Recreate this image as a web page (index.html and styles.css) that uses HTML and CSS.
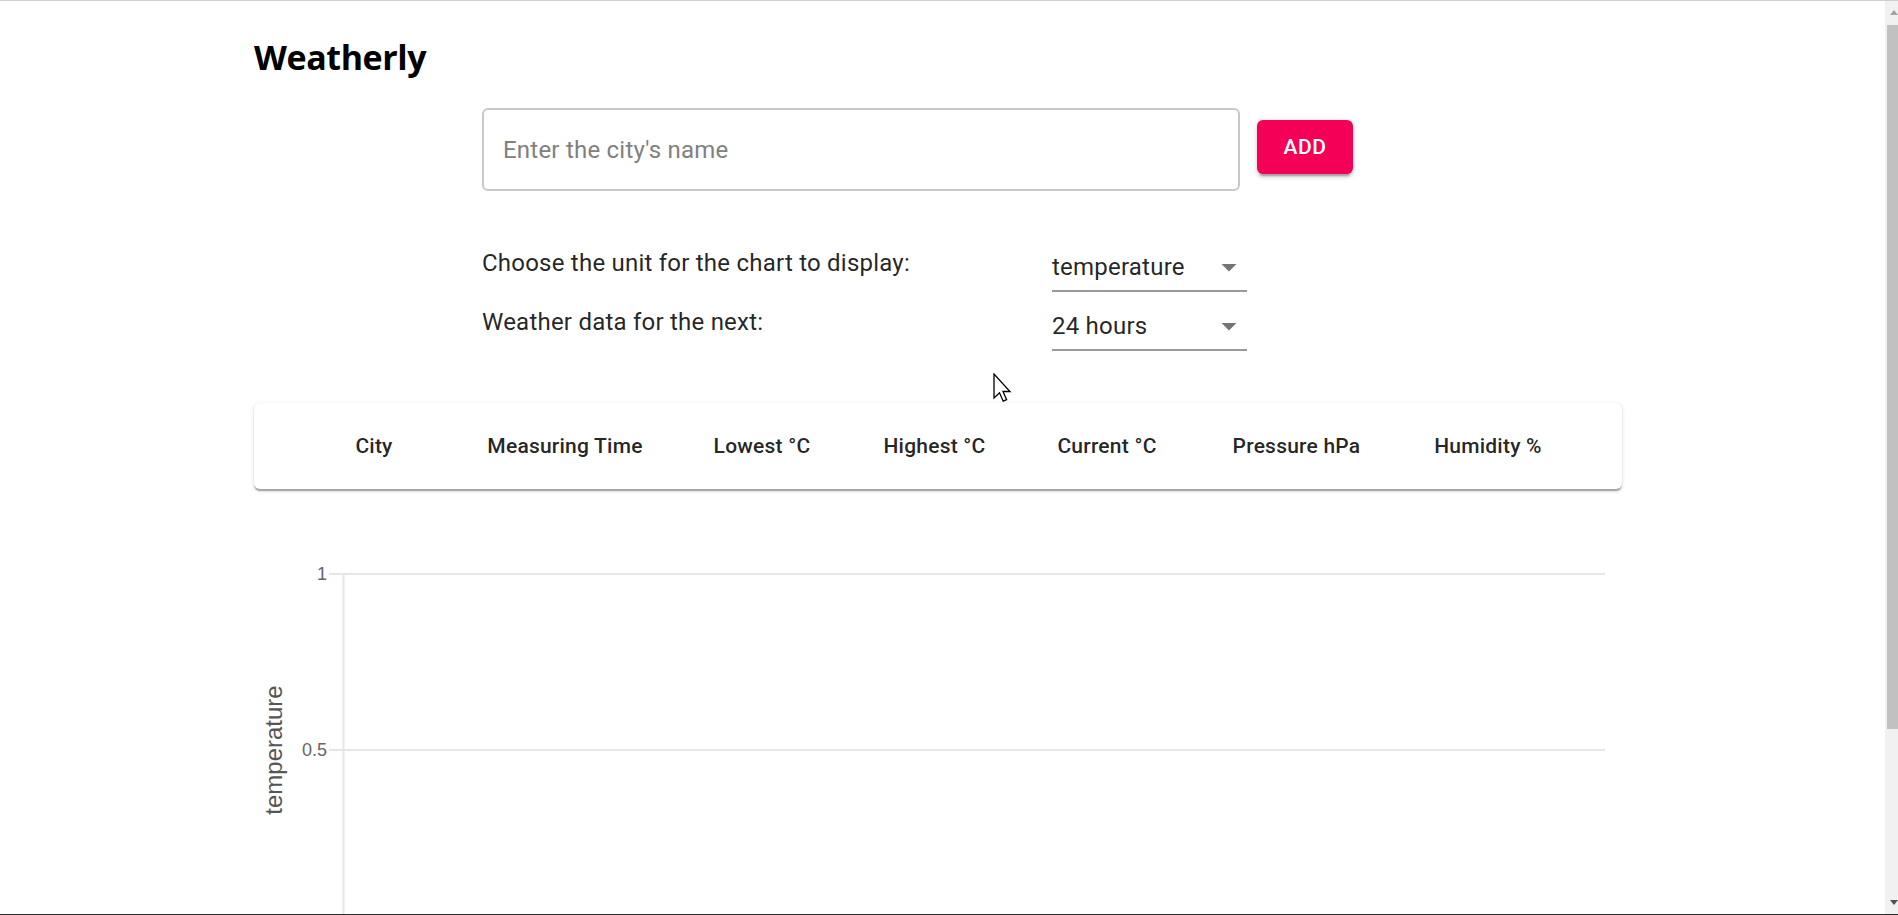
FILE: index.html
```html
<!DOCTYPE html>
<html lang="en">
<head>
<meta charset="utf-8">
<title>Weatherly</title>
<link rel="stylesheet" href="styles.css">
</head>
<body>
<div class="page">
  <h1 class="title">Weatherly</h1>
  <div class="controls">
    <div class="search-row">
      <div class="field"><input type="text" placeholder="Enter the city's name"></div>
      <button class="add" type="button">Add</button>
    </div>
    <div class="options">
      <div class="option-row">
        <span class="label">Choose the unit for the chart to display:</span>
        <div class="select">
          <span class="select-value">temperature</span>
          <svg class="select-icon" viewBox="0 0 24 24" width="36" height="36"><path d="M7 10l5 5 5-5z"/></svg>
        </div>
      </div>
      <div class="option-row">
        <span class="label">Weather data for the next:</span>
        <div class="select">
          <span class="select-value">24 hours</span>
          <svg class="select-icon" viewBox="0 0 24 24" width="36" height="36"><path d="M7 10l5 5 5-5z"/></svg>
        </div>
      </div>
    </div>
  </div>
  <div class="card">
    <div class="th">City</div>
    <div class="th">Measuring Time</div>
    <div class="th">Lowest °C</div>
    <div class="th">Highest °C</div>
    <div class="th">Current °C</div>
    <div class="th">Pressure hPa</div>
    <div class="th">Humidity %</div>
  </div>
  <div class="chart">
    <svg width="1368" height="420" viewBox="0 0 1368 420">
      <g stroke="#e6e6e6" stroke-width="2">
        <line x1="75" y1="54" x2="1351" y2="54"/>
        <line x1="75" y1="230" x2="1351" y2="230"/>
        <line x1="89.5" y1="54" x2="89.5" y2="420"/>
      </g>
      <g class="tick" text-anchor="end">
        <text x="73" y="60">1</text>
        <text x="73" y="236">0.5</text>
      </g>
      <text class="axis-label" transform="translate(28 230) rotate(-90)" text-anchor="middle">temperature</text>
    </svg>
  </div>
</div>
<div class="scrollbar">
  <span class="arrow-up"></span>
  <span class="thumb"></span>
  <span class="arrow-down"></span>
</div>
<svg class="cursor" width="20" height="30" viewBox="0 0 20 30"><path d="M1 1 L1 25 L6.5 19.8 L10.2 28.2 L13.6 26.7 L10 18.5 L17 18.5 Z" fill="#fff" stroke="#000" stroke-width="1.3" stroke-linejoin="miter"/></svg>
<div class="frame-top"></div>
<div class="frame-bottom"></div>
</body>
</html>
```
FILE: styles.css
```css
html, body {
  margin: 0;
  height: 100%;
  overflow: hidden;
  background: #fff;
}
body {
  font-family: Roboto, "Liberation Sans", sans-serif;
  color: rgba(0, 0, 0, 0.87);
}
.page {
  padding-left: 254px;
  width: 1368px;
  padding-top: 1px;
}
.title {
  margin: 34px 0 0;
  font: 700 34px/44px "Open Sans", "Noto Sans", sans-serif;
  letter-spacing: -0.4px;
  color: #000;
}
.controls {
  margin-left: 228px;
}
.search-row {
  display: flex;
  align-items: flex-start;
  gap: 17px;
  margin-top: 29px;
}
.field {
  width: 758px;
  height: 83px;
  box-sizing: border-box;
  border: 2px solid #c8c8c8;
  border-radius: 6px;
  display: flex;
  align-items: center;
  padding: 0 19px;
}
.field input {
  border: 0;
  outline: 0;
  padding: 0;
  width: 100%;
  background: transparent;
  font: 400 24px Roboto, sans-serif;
  letter-spacing: 0.00938em;
  color: #222;
}
.field input::placeholder {
  color: #808080;
  opacity: 1;
}
.add {
  margin-top: 12px;
  width: 96px;
  height: 54px;
  border: 0;
  border-radius: 6px;
  background: #f50057;
  color: #fff;
  font: 500 21px Roboto, sans-serif;
  letter-spacing: 0.6px;
  text-transform: uppercase;
  box-shadow: 0 4.5px 1.5px -3px rgba(0,0,0,.2), 0 3px 3px 0 rgba(0,0,0,.14), 0 1.5px 7.5px 0 rgba(0,0,0,.12);
  padding: 0;
}
.options {
  margin-top: 51px;
  display: flex;
  flex-direction: column;
  gap: 11px;
}
.option-row {
  display: grid;
  grid-template-columns: 570px 195px;
  height: 48px;
}
.label {
  font: 400 24px/36px Roboto, sans-serif;
  letter-spacing: 0.00938em;
  color: rgba(0, 0, 0, 0.87);
  padding-top: 3px;
}
.select {
  position: relative;
  display: flex;
  align-items: center;
  box-sizing: border-box;
  height: 48px;
  margin-top: 2px;
  border-bottom: 2px solid #9a9a9a;
  font: 400 24px Roboto, sans-serif;
  letter-spacing: 0.00938em;
  color: rgba(0, 0, 0, 0.87);
}
.select-value {
  flex: 1;
}
.select-icon {
  fill: rgba(0, 0, 0, 0.54);
  flex: none;
}
.card {
  margin-top: 54px;
  height: 86px;
  box-sizing: border-box;
  border-radius: 6px;
  background: #fff;
  box-shadow: 0 3px 1.5px -1.5px rgba(0,0,0,.2), 0 1.5px 1.5px 0 rgba(0,0,0,.14), 0 1.5px 4.5px 0 rgba(0,0,0,.12);
  display: grid;
  grid-template-columns: 192px 190px 204px 141px 204px 175px 208px;
  padding-left: 24px;
  align-items: center;
}
.th {
  text-align: center;
  font: 500 21px Roboto, sans-serif;
  letter-spacing: 0.01071em;
  color: rgba(0, 0, 0, 0.87);
  white-space: nowrap;
}
.chart {
  margin-top: 31px;
}
.chart svg {
  display: block;
}
.tick text {
  font: 18px "Liberation Sans", Arial, sans-serif;
  fill: #666;
}
.axis-label {
  font: 24px "Liberation Sans", Arial, sans-serif;
  fill: #555;
}
.scrollbar {
  position: fixed;
  top: 0;
  right: 0;
  bottom: 0;
  width: 13px;
  background: #f1f1f1;
}
.thumb {
  position: absolute;
  left: 2px;
  right: 0;
  top: 25px;
  height: 704px;
  background: #c1c1c1;
}
.arrow-up, .arrow-down {
  position: absolute;
  left: 5px;
  width: 0;
  height: 0;
  border-left: 4px solid transparent;
  border-right: 4px solid transparent;
}
.arrow-up {
  top: 10px;
  border-bottom: 5px solid #a3a3a3;
}
.arrow-down {
  bottom: 10px;
  border-top: 5px solid #505050;
}
.cursor {
  position: fixed;
  left: 993px;
  top: 373px;
}
.frame-top {
  position: fixed;
  top: 0;
  left: 0;
  right: 0;
  height: 1px;
  background: #cfcfcf;
}
.frame-bottom {
  position: fixed;
  bottom: 0;
  left: 0;
  right: 0;
  height: 1px;
  background: #2a2a2a;
}
```
